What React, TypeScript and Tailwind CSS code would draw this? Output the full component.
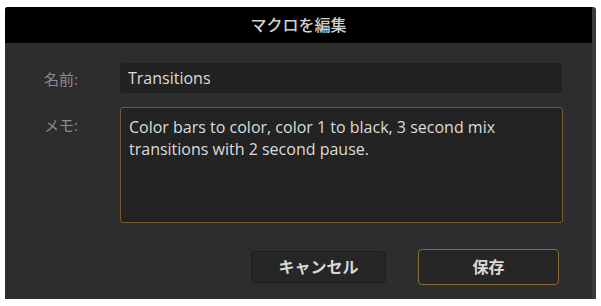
export default function App() {
  const font = { fontFamily: '"Open Sans", "Noto Sans CJK JP", sans-serif' };
  return (
    <div className="w-[601px] h-[306px] bg-white pt-[7px] pl-[5px]" style={font}>
      <div className="w-[591px] h-[292px] flex flex-col rounded-t-[3px] overflow-hidden border-r-[4px] border-r-[#3a3a3a] bg-[#2d2d2d]">
        <div className="h-[36px] bg-black flex items-center justify-center text-[16px] font-medium text-[#d0d0d0]">
          マクロを編集
        </div>
        <div className="flex-1 flex flex-col pl-[39px] pr-[25px]">
          <div className="flex items-center mt-[20px]">
            <div className="w-[76px] text-[15px] text-[#8c8c8c] pt-[3px]">名前:</div>
            <div className="w-[442px] h-[30px] bg-[#222222] rounded-[3px] flex items-center px-[8px] text-[16px] text-[#dcdcdc]">
              Transitions
            </div>
          </div>
          <div className="flex items-start mt-[14px]">
            <div className="w-[76px] text-[15px] leading-[22px] text-[#8c8c8c] pt-[7px]">メモ:</div>
            <div className="w-[443px] h-[116px] bg-[#232323] rounded-[3px] border border-[#7a5a2c] px-[8px] pt-[8px] text-[16px] leading-[22px] text-[#dcdcdc]">
              Color bars to color, color 1 to black, 3 second mix transitions with 2 second pause.
            </div>
          </div>
          <div className="flex justify-end gap-[32px] mt-[26px] pr-[8px]">
            <button className="w-[135px] h-[32px] mt-[2px] rounded-[4px] bg-[#262626] border border-[#1c1c1c] text-[16px] font-semibold text-[#d8d8d8]">
              キャンセル
            </button>
            <button className="w-[141px] h-[36px] rounded-[4px] bg-[#262626] border border-[#8a6a35] text-[16px] font-semibold text-[#d8d8d8]">
              保存
            </button>
          </div>
        </div>
      </div>
    </div>
  );
}
